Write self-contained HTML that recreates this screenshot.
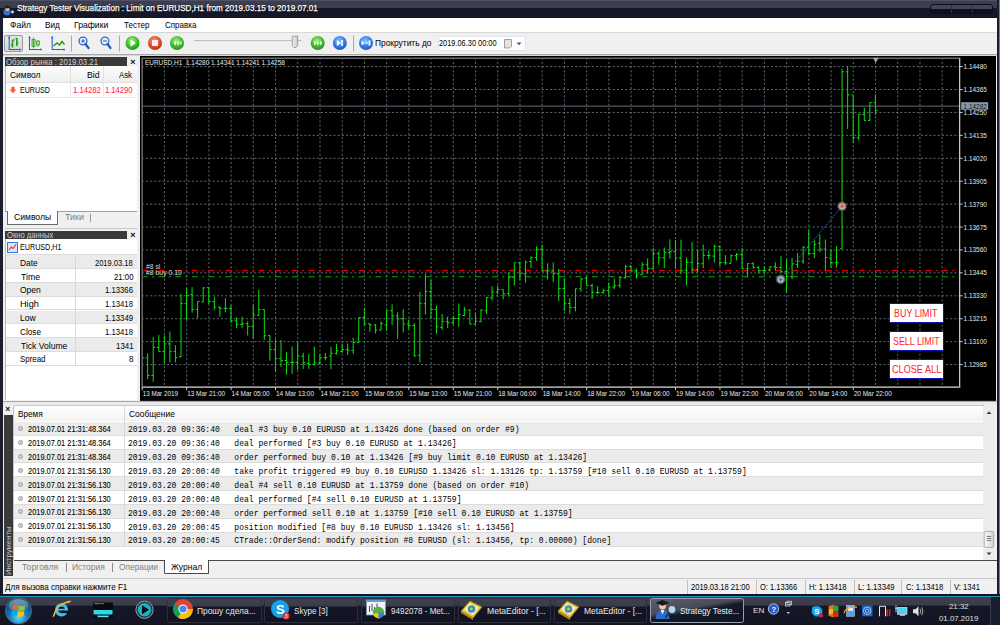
<!DOCTYPE html><html><head><meta charset="utf-8"><style>
*{margin:0;padding:0;box-sizing:border-box}
html,body{width:1000px;height:625px;overflow:hidden;background:#f0f0f0;font-family:"Liberation Sans",sans-serif;color:#000}
.a{position:absolute}
.t{position:absolute;white-space:nowrap;line-height:1}
.ax{font-family:"Liberation Sans",sans-serif;font-size:6.8px;fill:#e8e8e8}
.ax2{font-family:"Liberation Sans",sans-serif;font-size:7.3px;fill:#d8d8d8}
.mono{font-family:"Liberation Mono",monospace;font-size:8.06px}
</style></head><body><div class="a" style="left:0px;top:0px;width:1000px;height:17.9px;background:linear-gradient(#5a5d75 0px,#3d3f50 1.2px,#3c3e4e 7.5px,#161829 8.2px,#151727 17.6px)"></div>
<div class="a" style="left:930px;top:3.5px;width:63px;height:10.5px;border-radius:3px;background:linear-gradient(#44475a 0,#44475a 48%,#0e101c 52%,#0e101c 100%);border:1px solid #0a0c16"></div>
<div class="a" style="left:951px;top:4.5px;width:0.8px;height:8.5px;background:#2e3040"></div>
<div class="a" style="left:972px;top:4.5px;width:0.8px;height:8.5px;background:#2e3040"></div>
<svg class="a" style="left:2px;top:3px" width="14" height="13"><circle cx="5" cy="9" r="3.6" fill="#2f73c8"/><circle cx="5.5" cy="6" r="2" fill="#e8c090"/><path d="M1.5 4.2L5.5 2.2L9.5 4.2L5.5 5.6Z" fill="#202020"/><circle cx="10.5" cy="9" r="1.4" fill="#cfe6f8"/></svg>
<div class="t" style="left:17.43px;top:4.20px;font-size:9.3px;color:#fff;transform:scaleX(0.8763);transform-origin:0 0;text-shadow:0 0 1.5px #000;-webkit-text-stroke:0.25px #fff">Strategy Tester Visualization : Limit on EURUSD,H1 from 2019.03.15 to 2019.07.01</div>
<div class="a" style="left:0px;top:17px;width:3px;height:580px;background:#1a1d30"></div>
<div class="a" style="left:997px;top:0px;width:3px;height:597px;background:linear-gradient(90deg,#1a1d30 0,#1a1d30 66%,#2a9ac0 66%)"></div>
<div class="a" style="left:3px;top:17.9px;width:994px;height:14.1px;background:#fff"></div>
<div class="a" style="left:3px;top:32px;width:994px;height:1px;background:#d8d8d8"></div>
<div class="t" style="left:10.03px;top:21.09px;font-size:9.2px;color:#000;transform:scaleX(0.9310);transform-origin:0 0;">Файл</div>
<div class="t" style="left:45.35px;top:21.09px;font-size:9.2px;color:#000;transform:scaleX(0.8899);transform-origin:0 0;">Вид</div>
<div class="t" style="left:74.31px;top:21.09px;font-size:9.2px;color:#000;transform:scaleX(0.9378);transform-origin:0 0;">Графики</div>
<div class="t" style="left:123.84px;top:21.09px;font-size:9.2px;color:#000;transform:scaleX(0.8738);transform-origin:0 0;">Тестер</div>
<div class="t" style="left:164.60px;top:21.09px;font-size:9.2px;color:#000;transform:scaleX(0.8707);transform-origin:0 0;">Справка</div>
<div class="a" style="left:3px;top:53.8px;width:994px;height:1px;background:#a8a8a8"></div>
<div class="a" style="left:3px;top:54.8px;width:994px;height:1px;background:#d8d8d8"></div>
<div class="a" style="left:4.2px;top:35px;width:19.2px;height:16.6px;border:1px solid #9a9a9a;border-radius:2px;background:linear-gradient(#e6e6e6,#d8d8d8)"></div>
<svg class="a" style="left:0;top:0" width="1000" height="60"><g stroke="#2a5fd0" stroke-width="1.1" fill="none"><path d="M9.2 36.5V49.5H20"/></g><circle cx="20" cy="49.5" r="0.9" fill="#2a5fd0"/><path d="M9.2 36L8 38.2H10.4Z" fill="#2a5fd0"/><path d="M12.5 40V47.5M14.5 40H12.5M12.5 45H11M16.8 38V46M16.8 38.5H15.5M16.8 43H18.3" stroke="#20a020" stroke-width="1.6"/><path d="M29.5 36.5V49.5H41" stroke="#2a5fd0" stroke-width="1.1" fill="none"/><circle cx="41" cy="49.5" r="0.9" fill="#2a5fd0"/><path d="M29.5 36L28.3 38.2H30.7Z" fill="#2a5fd0"/><rect x="32" y="39.5" width="3" height="7" fill="#a8e090" stroke="#38a030" stroke-width="0.8"/><path d="M33.5 37.5V48.5M38 40V47" stroke="#38a030" stroke-width="0.8"/><rect x="36.5" y="41" width="3" height="4" fill="#a8e090" stroke="#38a030" stroke-width="0.8"/><path d="M52.2 36.5V49.5H64" stroke="#2a5fd0" stroke-width="1.1" fill="none"/><circle cx="64" cy="49.5" r="0.9" fill="#2a5fd0"/><path d="M52.2 36L51 38.2H53.4Z" fill="#2a5fd0"/><path d="M53.5 46L57 43L59.5 45L62 41.5L64.5 44.5" stroke="#20a020" stroke-width="1.5" fill="none"/><path d="M71.5 35.5V51.5" stroke="#a8a8a8" stroke-width="1"/><path d="M119.5 35.5V51.5" stroke="#a8a8a8" stroke-width="1"/><path d="M353.6 35.5V51.5" stroke="#a8a8a8" stroke-width="1"/><circle cx="83" cy="41" r="3.9" fill="#e8f2fc" stroke="#2a66d0" stroke-width="1.3"/><path d="M85.5 44L88.5 48" stroke="#2a5aa8" stroke-width="2.2" stroke-linecap="round"/><path d="M81 41H85" stroke="#2a66d0" stroke-width="1.1"/><path d="M83 39V43" stroke="#2a66d0" stroke-width="1.1"/><circle cx="105" cy="41" r="3.9" fill="#e8f2fc" stroke="#2a66d0" stroke-width="1.3"/><path d="M107.5 44L110.5 48" stroke="#2a5aa8" stroke-width="2.2" stroke-linecap="round"/><path d="M103 41H107" stroke="#2a66d0" stroke-width="1.1"/><defs><radialGradient id="gg" cx="0.45" cy="0.35" r="0.7"><stop offset="0" stop-color="#a8f090"/><stop offset="0.6" stop-color="#3cb828"/><stop offset="1" stop-color="#1f8a18"/></radialGradient><radialGradient id="rg" cx="0.45" cy="0.35" r="0.7"><stop offset="0" stop-color="#ff9a80"/><stop offset="0.6" stop-color="#e04a2a"/><stop offset="1" stop-color="#b02a10"/></radialGradient><radialGradient id="bg" cx="0.45" cy="0.35" r="0.7"><stop offset="0" stop-color="#8ec4ff"/><stop offset="0.6" stop-color="#2f7ae0"/><stop offset="1" stop-color="#1a55b0"/></radialGradient></defs><circle cx="132.5" cy="43" r="7" fill="url(#gg)"/><path d="M130.5 39.3L135.8 43L130.5 46.7Z" fill="#f4fff0"/><circle cx="155" cy="43" r="7" fill="url(#rg)"/><rect x="152" y="40" width="6" height="6" fill="#fff0ea"/><circle cx="177" cy="43" r="7" fill="url(#gg)"/><path d="M173.5 43L176 40.5V45.5Z M176.5 43L179 40.5V45.5Z M179.5 43L181.5 40.8V45.2Z" fill="#e8ffe0"/><circle cx="317.7" cy="43" r="7" fill="url(#gg)"/><path d="M314 40.5L316.5 43L314 45.5Z M317 40.5L319.5 43L317 45.5Z M320 40.5L322.3 43L320 45.5Z" fill="#e8ffe0"/><circle cx="339.8" cy="43" r="7" fill="url(#bg)"/><path d="M336.8 40L341 43L336.8 46Z" fill="#fff"/><rect x="341.3" y="40" width="1.6" height="6" fill="#fff"/><circle cx="366" cy="43" r="7" fill="url(#bg)"/><path d="M361.5 40.6L364.3 43L361.5 45.4Z" fill="#fff"/><rect x="364.6" y="42.3" width="3.6" height="1.4" fill="#d8e8ff"/><rect x="368.6" y="40.4" width="1.8" height="5.2" fill="#fff"/><path d="M194 40.8H301.5" stroke="#b0b0b0" stroke-width="1.2"/><path d="M194 41.6H301.5" stroke="#ffffff" stroke-width="0.6"/><path d="M292.3 36.3H297.7V45.5L295 48L292.3 45.5Z" fill="url(#thumb)" stroke="#8a8a8a" stroke-width="0.8"/><defs><linearGradient id="thumb" x1="0" x2="1"><stop offset="0" stop-color="#f4f4f4"/><stop offset="1" stop-color="#c8c8c8"/></linearGradient></defs></svg>
<div class="t" style="left:375.33px;top:39.09px;font-size:9.2px;color:#000;transform:scaleX(0.9133);transform-origin:0 0;">Прокрутить до</div>
<div class="a" style="left:437.6px;top:36.3px;width:88.4px;height:14.4px;background:#fff;border:1px solid #e4e4e4"></div>
<div class="t" style="left:438.93px;top:39.09px;font-size:9.2px;color:#000;transform:scaleX(0.8046);transform-origin:0 0;">2019.06.30 00:00</div>
<svg class="a" style="left:503px;top:38px" width="22" height="12"><path d="M1.5 1.5H8.5V8.2L6.8 10H1.5Z" fill="#e4e4e4" stroke="#8a8a8a" stroke-width="0.8"/><path d="M13.5 4.5H18.5L16 7.3Z" fill="#3a5a9a"/></svg>
<div class="a" style="left:5px;top:57px;width:122px;height:9px;background:#3a3a3a"></div>
<div class="t" style="left:6.15px;top:57.58px;font-size:8.4px;color:#d0d0d0;transform:scaleX(0.9267);transform-origin:0 0;">Обзор рынка : 2019.03.21</div>
<div class="t" style="left:130.3px;top:57.5px;font-size:9px;font-weight:bold;color:#111">×</div>
<div class="a" style="left:5px;top:66px;width:131.5px;height:145.3px;background:#fff;border-left:1px solid #b8b8b8"></div>
<div class="a" style="left:6px;top:66px;width:130.5px;height:16.5px;background:linear-gradient(#fdfdfd,#eeeeee);border-bottom:1px solid #e0e0e0"></div>
<div class="a" style="left:70.0px;top:66px;width:0.8px;height:16.5px;background:#e0e0e0"></div>
<div class="a" style="left:102.8px;top:66px;width:0.8px;height:16.5px;background:#e0e0e0"></div>
<div class="t" style="left:9.78px;top:71.19px;font-size:9.2px;color:#000;transform:scaleX(0.9219);transform-origin:0 0;">Символ</div>
<div class="t" style="left:87.00px;top:71.19px;font-size:9.2px;color:#000;transform:scaleX(0.9448);transform-origin:0 0;">Bid</div>
<div class="t" style="left:119.00px;top:71.19px;font-size:9.2px;color:#000;transform:scaleX(0.8487);transform-origin:0 0;">Ask</div>
<div class="a" style="left:6px;top:96.5px;width:130.5px;height:1px;background:#e8e8e8"></div>
<div class="a" style="left:70.0px;top:82.5px;width:0.8px;height:14px;background:#e8e8e8"></div>
<div class="a" style="left:102.8px;top:82.5px;width:0.8px;height:14px;background:#e8e8e8"></div>
<svg class="a" style="left:9px;top:86px" width="8" height="8"><path d="M2.5 0.8H5.5V3.6H7.3L4 7.3L0.7 3.6H2.5Z" fill="#f05a30"/></svg>
<div class="t" style="left:20.13px;top:85.99px;font-size:9.2px;color:#000;transform:scaleX(0.7698);transform-origin:0 0;">EURUSD</div>
<div class="t" style="left:72.92px;top:85.99px;font-size:9.2px;color:#ff2040;transform:scaleX(0.8347);transform-origin:0 0;">1.14282</div>
<div class="t" style="left:105.43px;top:85.99px;font-size:9.2px;color:#ff2040;transform:scaleX(0.8311);transform-origin:0 0;">1.14290</div>
<div class="a" style="left:5px;top:211.3px;width:131.5px;height:14px;background:#f0f0f0;border-top:1px solid #a0a0a0"></div>
<div class="a" style="left:7px;top:211.3px;width:50.5px;height:13.5px;background:#fff;border:1px solid #6a6a6a;border-top:none"></div>
<div class="t" style="left:13.77px;top:213.19px;font-size:9.2px;color:#000;transform:scaleX(0.9332);transform-origin:0 0;">Символы</div>
<div class="t" style="left:64.52px;top:213.19px;font-size:9.2px;color:#808080;transform:scaleX(0.9775);transform-origin:0 0;">Тики</div>
<div class="a" style="left:90px;top:214px;width:0.8px;height:8px;background:#9a9a9a"></div>
<div class="a" style="left:5px;top:227.8px;width:131.5px;height:1px;background:#c8c8c8"></div>
<div class="a" style="left:5px;top:231px;width:122px;height:8px;background:#3a3a3a"></div>
<div class="t" style="left:6.66px;top:230.98px;font-size:8.4px;color:#d0d0d0;transform:scaleX(0.9112);transform-origin:0 0;">Окно данных</div>
<div class="t" style="left:130.3px;top:231px;font-size:9px;font-weight:bold;color:#111">×</div>
<div class="a" style="left:5px;top:239px;width:131.5px;height:161.4px;background:#fff;border-left:1px solid #b8b8b8"></div>
<svg class="a" style="left:7px;top:242px" width="11" height="11"><rect x="0.5" y="0.5" width="10" height="10" fill="#d8e8f8" stroke="#3a78d0" stroke-width="1"/><path d="M2 8L4.2 5L6 6.5L9 2.5" stroke="#e03030" stroke-width="1.1" fill="none"/></svg>
<div class="t" style="left:20.13px;top:243.29px;font-size:9.2px;color:#000;transform:scaleX(0.7804);transform-origin:0 0;">EURUSD,H1</div>
<div class="a" style="left:6px;top:255.3px;width:130.5px;height:13.8px;background:#ebebeb;border-bottom:1px solid #dcdcdc"></div>
<div class="t" style="left:20.03px;top:258.79px;font-size:9.2px;color:#000;transform:scaleX(0.9145);transform-origin:0 0;">Date</div>
<div class="t" style="left:95.42px;top:258.79px;font-size:9.2px;color:#000;transform:scaleX(0.8183);transform-origin:0 0;">2019.03.18</div>
<div class="a" style="left:6px;top:269.1px;width:130.5px;height:13.8px;background:#ffffff;border-bottom:1px solid #dcdcdc"></div>
<div class="t" style="left:20.53px;top:272.59px;font-size:9.2px;color:#000;transform:scaleX(0.9485);transform-origin:0 0;">Time</div>
<div class="t" style="left:113.51px;top:272.59px;font-size:9.2px;color:#000;transform:scaleX(0.8507);transform-origin:0 0;">21:00</div>
<div class="a" style="left:6px;top:282.90000000000003px;width:130.5px;height:13.8px;background:#ebebeb;border-bottom:1px solid #dcdcdc"></div>
<div class="t" style="left:20.32px;top:286.39px;font-size:9.2px;color:#000;transform:scaleX(0.9264);transform-origin:0 0;">Open</div>
<div class="t" style="left:105.12px;top:286.39px;font-size:9.2px;color:#000;transform:scaleX(0.8416);transform-origin:0 0;">1.13366</div>
<div class="a" style="left:6px;top:296.70000000000005px;width:130.5px;height:13.8px;background:#ffffff;border-bottom:1px solid #dcdcdc"></div>
<div class="t" style="left:19.96px;top:300.19px;font-size:9.2px;color:#000;">High</div>
<div class="t" style="left:105.12px;top:300.19px;font-size:9.2px;color:#000;transform:scaleX(0.8416);transform-origin:0 0;">1.13418</div>
<div class="a" style="left:6px;top:310.5px;width:130.5px;height:13.8px;background:#ebebeb;border-bottom:1px solid #dcdcdc"></div>
<div class="t" style="left:20.02px;top:313.99px;font-size:9.2px;color:#000;transform:scaleX(0.9290);transform-origin:0 0;">Low</div>
<div class="t" style="left:105.12px;top:313.99px;font-size:9.2px;color:#000;transform:scaleX(0.8428);transform-origin:0 0;">1.13349</div>
<div class="a" style="left:6px;top:324.3px;width:130.5px;height:13.8px;background:#ffffff;border-bottom:1px solid #dcdcdc"></div>
<div class="t" style="left:20.29px;top:327.79px;font-size:9.2px;color:#000;transform:scaleX(0.8925);transform-origin:0 0;">Close</div>
<div class="t" style="left:105.12px;top:327.79px;font-size:9.2px;color:#000;transform:scaleX(0.8416);transform-origin:0 0;">1.13418</div>
<div class="a" style="left:6px;top:338.1px;width:130.5px;height:13.8px;background:#ebebeb;border-bottom:1px solid #dcdcdc"></div>
<div class="t" style="left:20.53px;top:341.59px;font-size:9.2px;color:#000;transform:scaleX(0.9314);transform-origin:0 0;">Tick Volume</div>
<div class="t" style="left:115.61px;top:341.59px;font-size:9.2px;color:#000;transform:scaleX(0.8572);transform-origin:0 0;">1341</div>
<div class="a" style="left:6px;top:351.90000000000003px;width:130.5px;height:13.8px;background:#ffffff;border-bottom:1px solid #dcdcdc"></div>
<div class="t" style="left:20.34px;top:355.39px;font-size:9.2px;color:#000;transform:scaleX(0.8584);transform-origin:0 0;">Spread</div>
<div class="t" style="left:128.53px;top:355.39px;font-size:9.2px;color:#000;transform:scaleX(0.9019);transform-origin:0 0;">8</div>
<div class="a" style="left:6px;top:254.3px;width:130.5px;height:1px;background:#dcdcdc"></div>
<div class="a" style="left:75.3px;top:254.8px;width:0.8px;height:110.4px;background:#d8d8d8"></div>
<svg width="856.2" height="344.9" viewBox="139.8 55.8 856.2 344.9" style="position:absolute;left:139.8px;top:55.8px">
<rect x="139.8" y="55.8" width="856.2" height="344.9" fill="#000"/>
<path d="M164.25 59V387 M186.47 59V387 M208.69 59V387 M230.91 59V387 M253.14 59V387 M275.36 59V387 M297.58 59V387 M319.80 59V387 M342.02 59V387 M364.24 59V387 M386.46 59V387 M408.69 59V387 M430.91 59V387 M453.13 59V387 M475.35 59V387 M497.57 59V387 M519.79 59V387 M542.01 59V387 M564.24 59V387 M586.46 59V387 M608.68 59V387 M630.90 59V387 M653.12 59V387 M675.34 59V387 M697.56 59V387 M719.78 59V387 M742.01 59V387 M764.23 59V387 M786.45 59V387 M808.67 59V387 M830.89 59V387 M853.11 59V387 M875.33 59V387 M897.56 59V387 M919.78 59V387 M942.00 59V387 M143 66.40H960 M143 89.32H960 M143 112.24H960 M143 135.16H960 M143 158.08H960 M143 181.00H960 M143 203.92H960 M143 226.84H960 M143 249.76H960 M143 272.68H960 M143 295.60H960 M143 318.52H960 M143 341.44H960 M143 364.36H960" stroke="#8a9aab" stroke-width="0.8" stroke-dasharray="2.0835 2.0835" stroke-dashoffset="1.4" fill="none" opacity="0.85"/>
<path d="M143 105.9H960" stroke="#4e5862" stroke-width="1.4"/>
<path d="M143 270.4H960" stroke="#e00000" stroke-width="1.1" stroke-dasharray="5.9 4.3 2.2 4.27" stroke-dashoffset="1.3"/>
<path d="M143 276.5H960" stroke="#00b400" stroke-width="1.1" stroke-dasharray="5.9 4.3 2.2 4.27" stroke-dashoffset="1.3"/>
<path d="M147.46 353.0V378.9M145.56 357.8H147.46M147.46 375.3H149.36 M153.01 336.9V381.7M151.11 375.3H153.01M153.01 347.1H154.91 M158.57 334.7V351.4M156.67 347.1H158.57M158.57 351.4H160.47 M164.12 335.1V362.3M162.22 351.4H164.12M164.12 343.7H166.02 M169.68 331.3V362.3M167.78 343.7H169.68M169.68 351.4H171.58 M175.23 345.0V362.3M173.33 351.4H175.23M175.23 357.4H177.13 M180.79 293.8V357.1M178.89 356.5H180.79M180.79 303.4H182.69 M186.34 288.0V320.1M184.44 303.4H186.34M186.34 295.4H188.24 M191.90 287.0V312.4M190.00 294.5H191.90M191.90 309.2H193.80 M197.46 301.3V317.9M195.56 309.2H197.46M197.46 301.3H199.36 M203.01 287.0V301.8M201.11 301.8H203.01M203.01 287.7H204.91 M208.57 287.0V303.7M206.67 287.4H208.57M208.57 301.5H210.47 M214.12 296.6V310.0M212.22 301.5H214.12M214.12 306.9H216.02 M219.68 306.2V316.5M217.78 307.1H219.68M219.68 308.2H221.58 M225.23 297.9V312.0M223.33 308.2H225.23M225.23 308.2H227.13 M230.79 305.0V322.3M228.89 308.2H230.79M230.79 320.7H232.69 M236.34 317.1V328.0M234.44 320.7H236.34M236.34 324.2H238.24 M241.90 316.5V327.6M240.00 324.2H241.90M241.90 323.5H243.80 M247.45 321.2V335.3M245.55 323.5H247.45M247.45 326.4H249.35 M253.01 304.6V338.5M251.11 326.3H253.01M253.01 314.8H254.91 M258.57 289.8V315.5M256.67 315.0H258.57M258.57 309.4H260.47 M264.12 309.0V339.8M262.22 309.4H264.12M264.12 335.5H266.02 M269.68 335.1V360.3M267.78 335.4H269.68M269.68 349.4H271.58 M275.23 339.0V371.2M273.33 349.4H275.23M275.23 358.4H277.13 M280.79 339.8V366.7M278.89 358.4H280.79M280.79 360.3H282.69 M286.34 352.0V374.4M284.44 360.3H286.34M286.34 362.3H288.24 M291.90 346.2V373.8M290.00 362.3H291.90M291.90 362.3H293.80 M297.45 342.4V370.0M295.55 362.3H297.45M297.45 355.9H299.35 M303.01 352.6V368.7M301.11 355.9H303.01M303.01 362.3H304.91 M308.57 353.9V368.7M306.67 363.5H308.57M308.57 364.2H310.47 M314.12 346.4V365.3M312.22 364.0H314.12M314.12 362.7H316.02 M319.68 353.8V364.7M317.78 362.7H319.68M319.68 357.6H321.58 M325.23 352.8V360.2M323.33 357.6H325.23M325.23 357.6H327.13 M330.79 346.7V369.1M328.89 355.7H330.79M330.79 353.1H332.69 M336.34 343.8V354.4M334.44 353.1H336.34M336.34 350.6H338.24 M341.90 343.5V352.5M340.00 351.2H341.90M341.90 349.3H343.80 M347.45 343.3V354.8M345.55 349.3H347.45M347.45 350.2H349.35 M353.01 337.4V353.8M351.11 350.2H353.01M353.01 342.3H354.91 M358.56 317.3V342.3M356.66 342.3H358.56M358.56 317.3H360.46 M364.12 307.7V325.6M362.22 317.3H364.12M364.12 323.7H366.02 M369.68 323.4V331.7M367.78 323.6H369.68M369.68 324.7H371.58 M375.23 324.0V333.2M373.33 324.7H375.23M375.23 329.8H377.13 M380.79 321.2V330.2M378.89 329.8H380.79M380.79 323.4H382.69 M386.34 310.2V330.4M384.44 324.7H386.34M386.34 310.6H388.24 M391.90 304.2V324.7M390.00 310.6H391.90M391.90 315.7H393.80 M397.45 311.9V338.7M395.55 315.7H397.45M397.45 318.6H399.35 M403.01 308.9V332.3M401.11 318.6H403.01M403.01 323.8H404.91 M408.56 319.5V329.0M406.66 323.8H408.56M408.56 325.5H410.46 M414.12 323.0V356.5M412.22 325.5H414.12M414.12 355.6H416.02 M419.68 291.8V362.3M417.78 355.2H419.68M419.68 303.4H421.58 M425.23 273.4V314.4M423.33 303.5H425.23M425.23 291.4H427.13 M430.79 279.8V318.3M428.89 291.4H430.79M430.79 309.3H432.69 M436.34 305.5V333.5M434.44 309.3H436.34M436.34 326.6H438.24 M441.90 313.8V329.8M440.00 327.2H441.90M441.90 321.2H443.80 M447.45 316.3V327.9M445.55 321.5H447.45M447.45 322.5H449.35 M453.01 316.1V324.7M451.11 322.5H453.01M453.01 318.3H454.91 M458.56 303.3V326.7M456.66 318.3H458.56M458.56 314.4H460.46 M464.12 306.7V316.2M462.22 315.3H464.12M464.12 309.8H466.02 M469.67 309.2V324.3M467.77 309.8H469.67M469.67 323.9H471.57 M475.23 312.9V324.6M473.33 323.9H475.23M475.23 321.0H477.13 M480.79 309.2V322.0M478.89 321.4H480.79M480.79 309.8H482.69 M486.34 296.8V313.9M484.44 310.4H486.34M486.34 297.4H488.24 M491.90 286.1V300.4M490.00 297.6H491.90M491.90 291.9H493.80 M497.45 285.5V294.4M495.55 291.9H497.45M497.45 289.3H499.35 M503.01 289.3V299.2M501.11 289.3H503.01M503.01 293.5H504.91 M508.56 272.0V296.3M506.66 293.5H508.56M508.56 277.1H510.46 M514.12 262.4V285.5M512.22 277.1H514.12M514.12 262.6H516.02 M519.67 261.4V280.0M517.77 262.6H519.67M519.67 273.5H521.57 M525.23 260.5V282.5M523.33 273.5H525.23M525.23 262.0H527.13 M530.79 256.2V267.8M528.89 261.4H530.79M530.79 257.5H532.69 M536.34 246.0V260.7M534.44 257.5H536.34M536.34 249.0H538.24 M541.90 244.3V271.0M540.00 249.0H541.90M541.90 270.7H543.80 M547.45 263.0V279.3M545.55 270.7H547.45M547.45 270.7H549.35 M553.01 262.3V281.9M551.11 270.7H553.01M553.01 273.3H554.91 M558.56 269.0V301.0M556.66 273.5H558.56M558.56 288.3H560.46 M564.12 278.0V311.0M562.22 288.4H564.12M564.12 303.4H566.02 M569.67 297.9V313.5M567.77 303.3H569.67M569.67 307.4H571.57 M575.23 288.2V311.0M573.33 307.4H575.23M575.23 288.6H577.13 M580.78 278.3V291.8M578.88 288.6H580.78M580.78 278.7H582.68 M586.34 276.7V285.4M584.44 277.9H586.34M586.34 285.4H588.24 M591.90 283.4V298.8M590.00 285.4H591.90M591.90 292.0H593.80 M597.45 286.0V293.7M595.55 292.4H597.45M597.45 292.4H599.35 M603.01 288.6V293.7M601.11 292.4H603.01M603.01 290.5H604.91 M608.56 282.2V296.2M606.66 290.5H608.56M608.56 286.9H610.46 M614.12 278.3V289.2M612.22 286.9H614.12M614.12 285.4H616.02 M619.67 276.4V287.6M617.77 285.3H619.67M619.67 277.4H621.57 M625.23 264.6V278.4M623.33 277.4H625.23M625.23 266.5H627.13 M630.78 264.8V270.7M628.88 266.5H630.78M630.78 270.7H632.68 M636.34 268.2V278.4M634.44 270.7H636.34M636.34 274.6H638.24 M641.89 262.0V274.8M640.00 274.6H641.89M641.89 264.6H643.79 M647.45 258.2V273.5M645.55 264.6H647.45M647.45 268.4H649.35 M653.01 247.9V269.7M651.11 268.4H653.01M653.01 253.3H654.91 M658.56 251.1V264.8M656.66 253.3H658.56M658.56 257.5H660.46 M664.12 247.3V267.8M662.22 257.5H664.12M664.12 252.4H666.02 M669.67 239.2V258.6M667.77 252.4H669.67M669.67 251.5H671.57 M675.23 239.8V268.7M673.33 251.4H675.23M675.23 257.8H677.13 M680.78 239.5V273.8M678.88 257.8H680.78M680.78 270.6H682.68 M686.34 257.1V285.3M684.44 269.7H686.34M686.34 262.3H688.24 M691.89 241.8V273.1M689.99 262.3H691.89M691.89 268.9H693.79 M697.45 249.4V272.5M695.55 269.3H697.45M697.45 263.5H699.35 M703.01 244.3V268.0M701.11 263.5H703.01M703.01 255.2H704.91 M708.56 250.7V259.0M706.66 255.2H708.56M708.56 255.2H710.46 M714.12 244.3V262.3M712.22 255.9H714.12M714.12 246.2H716.02 M719.67 245.6V265.8M717.77 246.2H719.67M719.67 262.3H721.57 M725.23 255.0V264.7M723.33 262.3H725.23M725.23 262.9H727.13 M730.78 254.4V263.4M728.88 263.2H730.78M730.78 255.5H732.68 M736.34 252.9V260.2M734.44 255.5H736.34M736.34 254.4H738.24 M741.89 248.0V268.5M739.99 254.4H741.89M741.89 268.5H743.79 M747.45 263.2V276.9M745.55 268.5H747.45M747.45 263.4H749.35 M753.00 262.1V268.5M751.11 263.4H753.00M753.00 267.3H754.90 M758.56 266.0V273.4M756.66 267.3H758.56M758.56 270.5H760.46 M764.12 266.2V273.7M762.22 270.5H764.12M764.12 270.5H766.02 M769.67 266.2V271.1M767.77 269.8H769.67M769.67 266.6H771.57 M775.23 262.1V270.5M773.33 266.6H775.23M775.23 267.3H777.13 M780.78 255.6V272.6M778.88 267.3H780.78M780.78 271.5H782.68 M786.34 259.2V292.5M784.44 271.3H786.34M786.34 276.5H788.24 M791.89 257.9V279.0M789.99 276.5H791.89M791.89 263.7H793.79 M797.45 252.8V267.8M795.55 264.3H797.45M797.45 261.1H799.35 M803.00 246.0V263.7M801.10 261.1H803.00M803.00 247.0H804.90 M808.56 229.7V254.7M806.66 247.0H808.56M808.56 253.4H810.46 M814.12 240.0V257.9M812.22 253.4H814.12M814.12 244.2H816.02 M819.67 234.2V251.9M817.77 243.2H819.67M819.67 248.9H821.57 M825.23 239.3V270.7M823.33 248.9H825.23M825.23 257.3H827.13 M830.78 248.9V267.5M828.88 257.9H830.78M830.78 262.6H832.68 M836.34 246.2V267.5M834.44 262.6H836.34M836.34 262.5H838.24 M841.89 68.8V249.0M839.99 248.6H841.89M841.89 71.6H843.79 M847.45 66.5V128.8M845.55 71.6H847.45M847.45 94.7H849.35 M853.00 95.3V142.9M851.10 94.7H853.00M853.00 137.5H854.90 M858.56 114.2V140.1M856.66 137.5H858.56M858.56 114.2H860.46 M864.12 107.5V120.6M862.22 114.2H864.12M864.12 120.3H866.01 M869.67 102.1V120.6M867.77 120.3H869.67M869.67 102.4H871.57 M875.23 94.0V114.5M873.33 102.4H875.23M875.23 110.3H877.13" stroke="#10e010" stroke-width="1" fill="none"/>
<path d="M142.5 357.8H144.2" stroke="#10e010" stroke-width="1"/>
<path d="M780.5 279 L841.9 206.1" stroke="#2a70b8" stroke-width="1" stroke-dasharray="1.8 1.4"/>
<circle cx="780.5" cy="279.2" r="4.5" fill="#7a7670" stroke="#4a4640" stroke-width="0.7"/>
<circle cx="780.5" cy="279.2" r="2.9" fill="#c4c0b8"/>
<path d="M780.5 277.0L782.7 279.2L780.5 281.4L778.3 279.2Z" fill="#2a7fd8"/>
<circle cx="841.9" cy="206.1" r="4.5" fill="#7a7670" stroke="#4a4640" stroke-width="0.7"/>
<circle cx="841.9" cy="206.1" r="2.9" fill="#c4c0b8"/>
<path d="M841.9 203.9L844.1 206.1L841.9 208.29999999999998L839.6999999999999 206.1Z" fill="#f05030"/>
<path d="M142 58.1H959.6V387H142Z" stroke="#6a6a6a" stroke-width="1.5" fill="none"/>
<path d="M959.3 58.1V386.9H142" stroke="#c8c8c8" stroke-width="1" fill="none"/>
<path d="M959.6 66.40H962.5 M959.6 89.32H962.5 M959.6 112.24H962.5 M959.6 135.16H962.5 M959.6 158.08H962.5 M959.6 181.00H962.5 M959.6 203.92H962.5 M959.6 226.84H962.5 M959.6 249.76H962.5 M959.6 272.68H962.5 M959.6 295.60H962.5 M959.6 318.52H962.5 M959.6 341.44H962.5 M959.6 364.36H962.5 M142.00 387V390 M186.44 387V390 M230.89 387V390 M275.33 387V390 M319.78 387V390 M364.22 387V390 M408.66 387V390 M453.11 387V390 M497.55 387V390 M542.00 387V390 M586.44 387V390 M630.88 387V390 M675.33 387V390 M719.77 387V390 M764.22 387V390 M808.66 387V390 M853.10 387V390" stroke="#c8c8c8" stroke-width="1"/>
<text x="963.4" y="68.90" class="ax" textLength="23.2" lengthAdjust="spacingAndGlyphs">1.14480</text>
<text x="963.4" y="91.82" class="ax" textLength="23.2" lengthAdjust="spacingAndGlyphs">1.14365</text>
<text x="963.4" y="114.74" class="ax" textLength="23.2" lengthAdjust="spacingAndGlyphs">1.14250</text>
<text x="963.4" y="137.66" class="ax" textLength="23.2" lengthAdjust="spacingAndGlyphs">1.14135</text>
<text x="963.4" y="160.58" class="ax" textLength="23.2" lengthAdjust="spacingAndGlyphs">1.14020</text>
<text x="963.4" y="183.50" class="ax" textLength="23.2" lengthAdjust="spacingAndGlyphs">1.13905</text>
<text x="963.4" y="206.42" class="ax" textLength="23.2" lengthAdjust="spacingAndGlyphs">1.13790</text>
<text x="963.4" y="229.34" class="ax" textLength="23.2" lengthAdjust="spacingAndGlyphs">1.13675</text>
<text x="963.4" y="252.26" class="ax" textLength="23.2" lengthAdjust="spacingAndGlyphs">1.13560</text>
<text x="963.4" y="275.18" class="ax" textLength="23.2" lengthAdjust="spacingAndGlyphs">1.13445</text>
<text x="963.4" y="298.10" class="ax" textLength="23.2" lengthAdjust="spacingAndGlyphs">1.13330</text>
<text x="963.4" y="321.02" class="ax" textLength="23.2" lengthAdjust="spacingAndGlyphs">1.13215</text>
<text x="963.4" y="343.94" class="ax" textLength="23.2" lengthAdjust="spacingAndGlyphs">1.13100</text>
<text x="963.4" y="366.86" class="ax" textLength="23.2" lengthAdjust="spacingAndGlyphs">1.12985</text>
<text x="142.50" y="396" class="ax" textLength="35.2" lengthAdjust="spacingAndGlyphs">13 Mar 2019</text>
<text x="186.94" y="396" class="ax" textLength="38.0" lengthAdjust="spacingAndGlyphs">13 Mar 21:00</text>
<text x="231.39" y="396" class="ax" textLength="38.0" lengthAdjust="spacingAndGlyphs">14 Mar 05:00</text>
<text x="275.83" y="396" class="ax" textLength="38.0" lengthAdjust="spacingAndGlyphs">14 Mar 13:00</text>
<text x="320.28" y="396" class="ax" textLength="38.0" lengthAdjust="spacingAndGlyphs">14 Mar 21:00</text>
<text x="364.72" y="396" class="ax" textLength="38.0" lengthAdjust="spacingAndGlyphs">15 Mar 05:00</text>
<text x="409.16" y="396" class="ax" textLength="38.0" lengthAdjust="spacingAndGlyphs">15 Mar 13:00</text>
<text x="453.61" y="396" class="ax" textLength="38.0" lengthAdjust="spacingAndGlyphs">15 Mar 21:00</text>
<text x="498.05" y="396" class="ax" textLength="38.0" lengthAdjust="spacingAndGlyphs">18 Mar 06:00</text>
<text x="542.50" y="396" class="ax" textLength="38.0" lengthAdjust="spacingAndGlyphs">18 Mar 14:00</text>
<text x="586.94" y="396" class="ax" textLength="38.0" lengthAdjust="spacingAndGlyphs">18 Mar 22:00</text>
<text x="631.38" y="396" class="ax" textLength="38.0" lengthAdjust="spacingAndGlyphs">19 Mar 06:00</text>
<text x="675.83" y="396" class="ax" textLength="38.0" lengthAdjust="spacingAndGlyphs">19 Mar 14:00</text>
<text x="720.27" y="396" class="ax" textLength="38.0" lengthAdjust="spacingAndGlyphs">19 Mar 22:00</text>
<text x="764.72" y="396" class="ax" textLength="38.0" lengthAdjust="spacingAndGlyphs">20 Mar 06:00</text>
<text x="809.16" y="396" class="ax" textLength="38.0" lengthAdjust="spacingAndGlyphs">20 Mar 14:00</text>
<text x="853.60" y="396" class="ax" textLength="38.0" lengthAdjust="spacingAndGlyphs">20 Mar 22:00</text>
<rect x="961" y="102" width="27" height="7.6" fill="#8497ab"/>
<text x="963.4" y="108.4" class="ax" style="fill:#1a1a1a" textLength="23.2" lengthAdjust="spacingAndGlyphs">1.14282</text>
<path d="M872.6 57.5H878.6L875.6 62.5Z" fill="#9aa8b8"/>
<text x="144.7" y="65" class="ax" textLength="140" lengthAdjust="spacingAndGlyphs">EURUSD,H1&#160; 1.14280 1.14341 1.14241 1.14258</text>
<text x="145.8" y="268.9" class="ax2" textLength="14.3" lengthAdjust="spacingAndGlyphs">#8 sl</text>
<text x="145.8" y="275" class="ax2" textLength="35.8" lengthAdjust="spacingAndGlyphs">#8 buy 0.10</text>
</svg>
<div class="a" style="left:889px;top:302.9px;width:55.2px;height:20.4px;background:#fff;border:1.2px solid #1010b0"></div>
<div class="a" style="left:889px;top:330.9px;width:55.2px;height:20.4px;background:#fff;border:1.2px solid #1010b0"></div>
<div class="a" style="left:889px;top:358.8px;width:55.2px;height:20.4px;background:#fff;border:1.2px solid #1010b0"></div>
<div class="t" style="left:894.39px;top:308.31px;font-size:10.8px;color:#ff2030;transform:scaleX(0.8269);transform-origin:0 0;">BUY LIMIT</div>
<div class="t" style="left:893.10px;top:336.31px;font-size:10.8px;color:#ff2030;transform:scaleX(0.8230);transform-origin:0 0;">SELL LIMIT</div>
<div class="t" style="left:891.54px;top:364.21px;font-size:10.8px;color:#ff2030;transform:scaleX(0.8457);transform-origin:0 0;">CLOSE ALL</div>
<div class="a" style="left:3px;top:400.8px;width:994px;height:1.2px;background:#a8a8a8"></div>
<div class="a" style="left:3px;top:402px;width:994px;height:3.2px;background:#eaeaea"></div>
<div class="a" style="left:13.5px;top:405.2px;width:970px;height:1px;background:#c8c8c8"></div>
<div class="t" style="left:5.2px;top:404.8px;font-size:8.5px;font-weight:bold;color:#111">×</div>
<div class="a" style="left:3.5px;top:415px;width:9px;height:160.7px;background:#3a3a3a"></div>
<div class="t" style="left:4.5px;top:575.3px;font-size:7.8px;color:#c8c8c8;transform-origin:0 0;transform:rotate(-90deg)">Инструменты</div>
<div class="a" style="left:13.5px;top:405.7px;width:969.5px;height:154.5px;background:#fff"></div>
<div class="a" style="left:13.5px;top:405.7px;width:969.5px;height:15.7px;background:linear-gradient(#ffffff,#f2f2f2)"></div>
<div class="a" style="left:124.2px;top:405.7px;width:0.8px;height:140.8px;background:#e0e0e0"></div>
<div class="t" style="left:17.75px;top:409.69px;font-size:9.2px;color:#000;transform:scaleX(0.8893);transform-origin:0 0;">Время</div>
<div class="t" style="left:129.28px;top:409.69px;font-size:9.2px;color:#000;transform:scaleX(0.9172);transform-origin:0 0;">Сообщение</div>
<div class="a" style="left:13.5px;top:421.8px;width:969.5px;height:13.9px;background:#ebebeb;border-bottom:1px solid #dcdcdc"></div>
<div class="a" style="left:18px;top:426.10px;width:5px;height:5px;border-radius:50%;background:#d0d0d0;border:1px solid #a0a0a0"></div>
<div class="t" style="left:28.33px;top:424.17px;font-size:9.8px;color:#000;transform:scaleX(0.7588);transform-origin:0 0;-webkit-text-stroke:0.1px #000">2019.07.01 21:31:48.364</div>
<div class="t" style="left:127.6px;top:425.41px;font-family:Liberation Mono,monospace;font-size:9.6px;color:#000;transform:scaleX(0.8396);transform-origin:0 0">2019.03.20&nbsp;09:36:40&nbsp;&nbsp;&nbsp;deal&nbsp;#3&nbsp;buy&nbsp;0.10&nbsp;EURUSD&nbsp;at&nbsp;1.13426&nbsp;done&nbsp;(based&nbsp;on&nbsp;order&nbsp;#9)</div>
<div class="a" style="left:13.5px;top:435.68px;width:969.5px;height:13.9px;background:#ffffff;border-bottom:1px solid #dcdcdc"></div>
<div class="a" style="left:18px;top:439.98px;width:5px;height:5px;border-radius:50%;background:#d0d0d0;border:1px solid #a0a0a0"></div>
<div class="t" style="left:28.33px;top:438.05px;font-size:9.8px;color:#000;transform:scaleX(0.7588);transform-origin:0 0;-webkit-text-stroke:0.1px #000">2019.07.01 21:31:48.364</div>
<div class="t" style="left:127.6px;top:439.29px;font-family:Liberation Mono,monospace;font-size:9.6px;color:#000;transform:scaleX(0.8396);transform-origin:0 0">2019.03.20&nbsp;09:36:40&nbsp;&nbsp;&nbsp;deal&nbsp;performed&nbsp;[#3&nbsp;buy&nbsp;0.10&nbsp;EURUSD&nbsp;at&nbsp;1.13426]</div>
<div class="a" style="left:13.5px;top:449.56px;width:969.5px;height:13.9px;background:#ebebeb;border-bottom:1px solid #dcdcdc"></div>
<div class="a" style="left:18px;top:453.86px;width:5px;height:5px;border-radius:50%;background:#d0d0d0;border:1px solid #a0a0a0"></div>
<div class="t" style="left:28.33px;top:451.93px;font-size:9.8px;color:#000;transform:scaleX(0.7588);transform-origin:0 0;-webkit-text-stroke:0.1px #000">2019.07.01 21:31:48.364</div>
<div class="t" style="left:127.6px;top:453.17px;font-family:Liberation Mono,monospace;font-size:9.6px;color:#000;transform:scaleX(0.8396);transform-origin:0 0">2019.03.20&nbsp;09:36:40&nbsp;&nbsp;&nbsp;order&nbsp;performed&nbsp;buy&nbsp;0.10&nbsp;at&nbsp;1.13426&nbsp;[#9&nbsp;buy&nbsp;limit&nbsp;0.10&nbsp;EURUSD&nbsp;at&nbsp;1.13426]</div>
<div class="a" style="left:13.5px;top:463.44px;width:969.5px;height:13.9px;background:#ffffff;border-bottom:1px solid #dcdcdc"></div>
<div class="a" style="left:18px;top:467.74px;width:5px;height:5px;border-radius:50%;background:#d0d0d0;border:1px solid #a0a0a0"></div>
<div class="t" style="left:28.33px;top:465.81px;font-size:9.8px;color:#000;transform:scaleX(0.7592);transform-origin:0 0;-webkit-text-stroke:0.1px #000">2019.07.01 21:31:56.130</div>
<div class="t" style="left:127.6px;top:467.05px;font-family:Liberation Mono,monospace;font-size:9.6px;color:#000;transform:scaleX(0.8396);transform-origin:0 0">2019.03.20&nbsp;20:00:40&nbsp;&nbsp;&nbsp;take&nbsp;profit&nbsp;triggered&nbsp;#9&nbsp;buy&nbsp;0.10&nbsp;EURUSD&nbsp;1.13426&nbsp;sl:&nbsp;1.13126&nbsp;tp:&nbsp;1.13759&nbsp;[#10&nbsp;sell&nbsp;0.10&nbsp;EURUSD&nbsp;at&nbsp;1.13759]</div>
<div class="a" style="left:13.5px;top:477.32px;width:969.5px;height:13.9px;background:#ebebeb;border-bottom:1px solid #dcdcdc"></div>
<div class="a" style="left:18px;top:481.62px;width:5px;height:5px;border-radius:50%;background:#d0d0d0;border:1px solid #a0a0a0"></div>
<div class="t" style="left:28.33px;top:479.69px;font-size:9.8px;color:#000;transform:scaleX(0.7592);transform-origin:0 0;-webkit-text-stroke:0.1px #000">2019.07.01 21:31:56.130</div>
<div class="t" style="left:127.6px;top:480.93px;font-family:Liberation Mono,monospace;font-size:9.6px;color:#000;transform:scaleX(0.8396);transform-origin:0 0">2019.03.20&nbsp;20:00:40&nbsp;&nbsp;&nbsp;deal&nbsp;#4&nbsp;sell&nbsp;0.10&nbsp;EURUSD&nbsp;at&nbsp;1.13759&nbsp;done&nbsp;(based&nbsp;on&nbsp;order&nbsp;#10)</div>
<div class="a" style="left:13.5px;top:491.20000000000005px;width:969.5px;height:13.9px;background:#ffffff;border-bottom:1px solid #dcdcdc"></div>
<div class="a" style="left:18px;top:495.50px;width:5px;height:5px;border-radius:50%;background:#d0d0d0;border:1px solid #a0a0a0"></div>
<div class="t" style="left:28.33px;top:493.57px;font-size:9.8px;color:#000;transform:scaleX(0.7592);transform-origin:0 0;-webkit-text-stroke:0.1px #000">2019.07.01 21:31:56.130</div>
<div class="t" style="left:127.6px;top:494.81px;font-family:Liberation Mono,monospace;font-size:9.6px;color:#000;transform:scaleX(0.8396);transform-origin:0 0">2019.03.20&nbsp;20:00:40&nbsp;&nbsp;&nbsp;deal&nbsp;performed&nbsp;[#4&nbsp;sell&nbsp;0.10&nbsp;EURUSD&nbsp;at&nbsp;1.13759]</div>
<div class="a" style="left:13.5px;top:505.08000000000004px;width:969.5px;height:13.9px;background:#ebebeb;border-bottom:1px solid #dcdcdc"></div>
<div class="a" style="left:18px;top:509.38px;width:5px;height:5px;border-radius:50%;background:#d0d0d0;border:1px solid #a0a0a0"></div>
<div class="t" style="left:28.33px;top:507.45px;font-size:9.8px;color:#000;transform:scaleX(0.7592);transform-origin:0 0;-webkit-text-stroke:0.1px #000">2019.07.01 21:31:56.130</div>
<div class="t" style="left:127.6px;top:508.69px;font-family:Liberation Mono,monospace;font-size:9.6px;color:#000;transform:scaleX(0.8396);transform-origin:0 0">2019.03.20&nbsp;20:00:40&nbsp;&nbsp;&nbsp;order&nbsp;performed&nbsp;sell&nbsp;0.10&nbsp;at&nbsp;1.13759&nbsp;[#10&nbsp;sell&nbsp;0.10&nbsp;EURUSD&nbsp;at&nbsp;1.13759]</div>
<div class="a" style="left:13.5px;top:518.96px;width:969.5px;height:13.9px;background:#ffffff;border-bottom:1px solid #dcdcdc"></div>
<div class="a" style="left:18px;top:523.26px;width:5px;height:5px;border-radius:50%;background:#d0d0d0;border:1px solid #a0a0a0"></div>
<div class="t" style="left:28.33px;top:521.33px;font-size:9.8px;color:#000;transform:scaleX(0.7592);transform-origin:0 0;-webkit-text-stroke:0.1px #000">2019.07.01 21:31:56.130</div>
<div class="t" style="left:127.6px;top:522.57px;font-family:Liberation Mono,monospace;font-size:9.6px;color:#000;transform:scaleX(0.8396);transform-origin:0 0">2019.03.20&nbsp;20:00:45&nbsp;&nbsp;&nbsp;position&nbsp;modified&nbsp;[#8&nbsp;buy&nbsp;0.10&nbsp;EURUSD&nbsp;1.13426&nbsp;sl:&nbsp;1.13456]</div>
<div class="a" style="left:13.5px;top:532.84px;width:969.5px;height:13.9px;background:#ebebeb;border-bottom:1px solid #dcdcdc"></div>
<div class="a" style="left:18px;top:537.14px;width:5px;height:5px;border-radius:50%;background:#d0d0d0;border:1px solid #a0a0a0"></div>
<div class="t" style="left:28.33px;top:535.21px;font-size:9.8px;color:#000;transform:scaleX(0.7592);transform-origin:0 0;-webkit-text-stroke:0.1px #000">2019.07.01 21:31:56.130</div>
<div class="t" style="left:127.6px;top:536.45px;font-family:Liberation Mono,monospace;font-size:9.6px;color:#000;transform:scaleX(0.8396);transform-origin:0 0">2019.03.20&nbsp;20:00:45&nbsp;&nbsp;&nbsp;CTrade::OrderSend:&nbsp;modify&nbsp;position&nbsp;#8&nbsp;EURUSD&nbsp;(sl:&nbsp;1.13456,&nbsp;tp:&nbsp;0.00000)&nbsp;[done]</div>
<div class="a" style="left:124.2px;top:405.7px;width:0.8px;height:140.8px;background:#d8d8d8"></div>
<div class="a" style="left:13.2px;top:405.5px;width:0.9px;height:154.5px;background:#c4c4c4"></div>
<div class="a" style="left:983px;top:405.7px;width:12px;height:154.5px;background:#ececec"></div>
<svg class="a" style="left:983px;top:405px" width="13" height="155"><path d="M3.5 9L6 6.2L8.5 9Z" fill="#404040"/><path d="M3.5 147.5L6 150.3L8.5 147.5Z" fill="#404040"/><rect x="1.2" y="126.4" width="9.5" height="16" rx="1.5" fill="url(#sg)" stroke="#9a9a9a" stroke-width="0.8"/><path d="M3.8 131.5H8.2M3.8 133.5H8.2M3.8 135.5H8.2" stroke="#505050" stroke-width="0.7"/><defs><linearGradient id="sg" x1="0" x2="1"><stop offset="0" stop-color="#f8f8f8"/><stop offset="1" stop-color="#d4d4d4"/></linearGradient></defs></svg>
<div class="a" style="left:13.5px;top:559.7px;width:983px;height:1.2px;background:#4a4a4a"></div>
<div class="a" style="left:164.3px;top:560px;width:44.5px;height:14px;background:#fff;border:1.2px solid #4a4a4a;border-top:none;border-radius:0 0 1.5px 1.5px"></div>
<div class="t" style="left:22.43px;top:563.09px;font-size:9.2px;color:#808080;transform:scaleX(0.9434);transform-origin:0 0;">Торговля</div>
<div class="a" style="left:65.5px;top:562.5px;width:0.9px;height:9px;background:#8a8a8a"></div>
<div class="t" style="left:72.02px;top:563.09px;font-size:9.2px;color:#808080;transform:scaleX(0.9209);transform-origin:0 0;">История</div>
<div class="a" style="left:112.4px;top:562.5px;width:0.9px;height:9px;background:#8a8a8a"></div>
<div class="t" style="left:118.82px;top:563.09px;font-size:9.2px;color:#808080;transform:scaleX(0.9072);transform-origin:0 0;">Операции</div>
<div class="t" style="left:171.07px;top:563.09px;font-size:9.2px;color:#000;transform:scaleX(0.9330);transform-origin:0 0;">Журнал</div>
<div class="a" style="left:3px;top:577.6px;width:994px;height:1px;background:#c8c8c8"></div>
<div class="a" style="left:3px;top:578.6px;width:994px;height:16px;background:#f0f0f0"></div>
<div class="t" style="left:4.66px;top:583.29px;font-size:9.2px;color:#000;transform:scaleX(0.8810);transform-origin:0 0;">Для вызова справки нажмите F1</div>
<div class="a" style="left:687px;top:580px;width:0.9px;height:13.5px;background:#c0c0c0"></div>
<div class="a" style="left:755.8px;top:580px;width:0.9px;height:13.5px;background:#c0c0c0"></div>
<div class="a" style="left:804.8px;top:580px;width:0.9px;height:13.5px;background:#c0c0c0"></div>
<div class="a" style="left:854.4px;top:580px;width:0.9px;height:13.5px;background:#c0c0c0"></div>
<div class="a" style="left:901.4px;top:580px;width:0.9px;height:13.5px;background:#c0c0c0"></div>
<div class="a" style="left:949.8px;top:580px;width:0.9px;height:13.5px;background:#c0c0c0"></div>
<div class="t" style="left:691.32px;top:583.39px;font-size:9.2px;color:#000;transform:scaleX(0.8202);transform-origin:0 0;">2019.03.18 21:00</div>
<div class="t" style="left:759.86px;top:583.39px;font-size:9.2px;color:#000;transform:scaleX(0.8186);transform-origin:0 0;">O: 1.13366</div>
<div class="t" style="left:808.59px;top:583.39px;font-size:9.2px;color:#000;transform:scaleX(0.8340);transform-origin:0 0;">H: 1.13418</div>
<div class="t" style="left:857.58px;top:583.39px;font-size:9.2px;color:#000;transform:scaleX(0.8412);transform-origin:0 0;">L: 1.13349</div>
<div class="t" style="left:905.82px;top:583.39px;font-size:9.2px;color:#000;transform:scaleX(0.8288);transform-origin:0 0;">C: 1.13418</div>
<div class="t" style="left:954.16px;top:583.39px;font-size:9.2px;color:#000;transform:scaleX(0.8282);transform-origin:0 0;">V: 1341</div>
<div class="a" style="left:0px;top:594.2px;width:1000px;height:2px;background:#121526"></div>
<div class="a" style="left:0px;top:596px;width:1000px;height:1px;background:#2a90b8"></div>
<div class="a" style="left:0px;top:597px;width:1000px;height:28px;background:linear-gradient(#3b3d4b 0,#3b3d4b 8.3px,#151727 8.8px,#131525 28px)"></div>
<div class="a" style="left:167px;top:598.4px;width:95px;height:25px;background:linear-gradient(#3e404e 0,#3a3c4a 30%,#141625 36%,#111322 100%);border:1px solid #2c2e3c;border-radius:2.5px"></div>
<div class="a" style="left:264px;top:598.4px;width:94px;height:25px;background:linear-gradient(#3e404e 0,#3a3c4a 30%,#141625 36%,#111322 100%);border:1px solid #2c2e3c;border-radius:2.5px"></div>
<div class="a" style="left:361px;top:598.4px;width:94px;height:25px;background:linear-gradient(#3e404e 0,#3a3c4a 30%,#141625 36%,#111322 100%);border:1px solid #2c2e3c;border-radius:2.5px"></div>
<div class="a" style="left:457.5px;top:598.4px;width:93.10000000000002px;height:25px;background:linear-gradient(#3e404e 0,#3a3c4a 30%,#141625 36%,#111322 100%);border:1px solid #2c2e3c;border-radius:2.5px"></div>
<div class="a" style="left:553.5px;top:598.4px;width:93.5px;height:25px;background:linear-gradient(#3e404e 0,#3a3c4a 30%,#141625 36%,#111322 100%);border:1px solid #2c2e3c;border-radius:2.5px"></div>
<div class="a" style="left:650px;top:598.4px;width:94px;height:25px;background:linear-gradient(170deg,#5a5e6e 0,#474b5a 40%,#141a28 52%,#0e1420 100%);border:1px solid #9a9eaa;border-radius:2.5px"></div>
<svg class="a" style="left:0;top:0" width="1000" height="625"><defs><radialGradient id="orb" cx="0.5" cy="0.75" r="0.75"><stop offset="0" stop-color="#5ae0ff"/><stop offset="0.45" stop-color="#1a78b8"/><stop offset="1" stop-color="#0c3460"/></radialGradient><linearGradient id="orbh" x1="0" y1="0" x2="0" y2="1"><stop offset="0" stop-color="#ffffff" stop-opacity="0.45"/><stop offset="1" stop-color="#ffffff" stop-opacity="0.05"/></linearGradient></defs><circle cx="18.5" cy="610.8" r="13" fill="url(#orb)" stroke="#5a7890" stroke-width="0.8"/><ellipse cx="18.5" cy="605.5" rx="10" ry="6.5" fill="url(#orbh)"/><path d="M12.8 605.2Q15.5 603.6 18.2 605.3L17.6 610.2Q15 608.8 12.2 610.2Z" fill="#f26522"/><path d="M18.8 605.5Q21.8 607.2 25 605.2L24.4 610.2Q21.4 611.8 18.2 610.5Z" fill="#8dc63f"/><path d="M12.1 610.9Q15 609.5 17.5 610.9L16.9 615.8Q14.3 614.4 11.4 615.8Z" fill="#00aeef"/><path d="M18.1 611.2Q21.3 612.6 24.3 611L23.6 615.9Q20.6 617.5 17.5 616.2Z" fill="#ffc20e"/><circle cx="61.5" cy="609.8" r="6.6" fill="#3cc0f0"/><circle cx="61.5" cy="609.8" r="3.3" fill="#12152a"/><rect x="57.2" y="608.8" width="8.8" height="1.8" fill="#3cc0f0"/><path d="M61.5 610.6H68.5V613.2H61.5Z" fill="#12152a"/><path d="M52.5 617.5Q56 602 71.5 600.5Q70 603 67.5 603Q58 604 54.5 616Z" fill="#f0c020"/><rect x="93" y="602.5" width="20" height="16" rx="1" fill="#0a0a0e"/><rect x="94.5" y="603" width="5" height="1.2" fill="#30a040"/><rect x="100" y="603" width="4" height="1.2" fill="#d03030"/><rect x="93.5" y="610" width="19" height="4.5" fill="#30d8e8"/><rect x="97" y="614.5" width="12" height="3" fill="#1a6a78"/><rect x="98" y="616" width="10" height="1" fill="#60e8f0"/><circle cx="144.5" cy="609.8" r="8.6" fill="#2a3038" stroke="#9aa2aa" stroke-width="1"/><circle cx="144.5" cy="609.8" r="6.8" fill="#1ab0c8"/><path d="M142 605.3L149 609.8L142 614.3Z" fill="#0a0a0a"/><circle cx="183" cy="609" r="10" fill="#db4437"/><path d="M183 609L174.3 604A10 10 0 0 0 178 617.7Z" fill="#0f9d58"/><path d="M183 609L178 617.7A10 10 0 0 0 192.7 611L183 609Z" fill="#f4c20d"/><path d="M183 609H193A10 10 0 0 0 192.7 611Z" fill="#f4c20d"/><circle cx="183" cy="609" r="4.6" fill="#fff"/><circle cx="183" cy="609" r="3.6" fill="#4285f4"/><circle cx="280" cy="609" r="9" fill="#1aa0e8"/><text x="276" y="614" font-family="Liberation Sans" font-weight="bold" font-size="13" fill="#fff">S</text><circle cx="286" cy="616" r="3.6" fill="#e03030"/><text x="284.6" y="618.3" font-family="Liberation Sans" font-size="5.5" fill="#fff">3</text><rect x="366.5" y="600" width="19" height="15" fill="#eef3f8" stroke="#7a9ab8" stroke-width="0.8"/><rect x="366.5" y="600" width="19" height="2" fill="#6a9ad0"/><path d="M369.5 612V606M372 611V604M374.5 610V607M377 609V603.5" stroke="#303838" stroke-width="0.9"/><circle cx="378.5" cy="612.5" r="5.8" fill="#58b040"/><path d="M372.8 613.5Q375 618.5 380 618.5L380 613Z" fill="#f0c820"/><path d="M378.5 618.3Q383.5 618 384.3 612.5L378.5 612.5Z" fill="#3a7ed0"/><path d="M461 611L470 601L482 607L473 618Z" fill="#e8c838" stroke="#9a7a18" stroke-width="0.7"/><path d="M461 611L473 618L473 620L461 613Z" fill="#b08a18"/><path d="M464 609.5L470 603L479 607.5L473 615Z" fill="#f4f0d8"/><circle cx="471.5" cy="609" r="3.8" fill="#3a8ac8"/><path d="M468.5 609A3.8 3.8 0 0 1 473 605.5L471.5 609Z" fill="#40b040"/><circle cx="471.5" cy="609" r="1.3" fill="#e8c838"/><path d="M558 611L567 601L579 607L570 618Z" fill="#e8c838" stroke="#9a7a18" stroke-width="0.7"/><path d="M558 611L570 618L570 620L558 613Z" fill="#b08a18"/><path d="M561 609.5L567 603L576 607.5L570 615Z" fill="#f4f0d8"/><circle cx="568.5" cy="609" r="3.8" fill="#3a8ac8"/><path d="M565.5 609A3.8 3.8 0 0 1 570 605.5L568.5 609Z" fill="#40b040"/><circle cx="568.5" cy="609" r="1.3" fill="#e8c838"/><path d="M655.5 619Q656 610 662.5 609.5Q669 610 669.5 619Z" fill="#2a6ad0"/><path d="M660.5 610L662.5 614.5L664.5 610Z" fill="#e8eef8"/><circle cx="662.5" cy="606" r="3.4" fill="#f2c8a0"/><path d="M655.5 603L662.5 600L669.5 603L662.5 605.5Z" fill="#181818"/><rect x="660.5" y="603.5" width="4" height="1.8" fill="#181818"/><circle cx="672" cy="609.5" r="4" fill="#b8d8f0" stroke="#404a58" stroke-width="1.2"/><path d="M669.3 612.5L665.5 617.5" stroke="#303030" stroke-width="1.8"/><circle cx="773.5" cy="609" r="5.2" fill="#2a5ad0" stroke="#c0c8e0" stroke-width="0.9"/><text x="771.5" y="612" font-family="Liberation Sans" font-weight="bold" font-size="7.5" fill="#fff">?</text><rect x="785.5" y="602.5" width="4.5" height="3.5" fill="none" stroke="#d0d0d0" stroke-width="0.8"/><rect x="787" y="601.2" width="4.5" height="3.5" fill="none" stroke="#d0d0d0" stroke-width="0.8"/><path d="M786.5 612H790L788.2 614Z" fill="#d0d0d0"/><g transform="translate(0,2.3)"><circle cx="817" cy="609" r="5.3" fill="#1aa0e8"/><circle cx="814.5" cy="606.5" r="2.5" fill="#1aa0e8"/><circle cx="819.5" cy="611.5" r="2.5" fill="#1aa0e8"/><text x="814.3" y="612.2" font-family="Liberation Sans" font-weight="bold" font-size="8" fill="#fff">S</text><circle cx="820.8" cy="613" r="2.2" fill="#e02020"/><path d="M828.5 604L833 602.5V615L828.5 613.5Z" fill="#e87020"/><path d="M833 602.5L838.5 604V609H833Z" fill="#38a038"/><path d="M833 609H838.5V614.5L833 615Z" fill="#d03020"/><path d="M829 608Q831 606 833 607V611L829 612Z" fill="#f0c020"/><rect x="846.5" y="603" width="8" height="11" fill="#5aa0e0" stroke="#c0d8f0" stroke-width="0.5"/><rect x="848" y="604.5" width="5" height="4" fill="#f0f0f0"/><path d="M844 611Q845 604 857 605" stroke="#f0a020" stroke-width="1.2" fill="none"/><rect x="862" y="603" width="10.5" height="11" fill="#1a60c0"/><circle cx="867.2" cy="608.5" r="3.8" fill="none" stroke="#b8d8f8" stroke-width="0.8"/><circle cx="867.2" cy="608.5" r="1.8" fill="none" stroke="#b8d8f8" stroke-width="0.8"/><path d="M879.5 614V604H885.5V614" stroke="#e8e8e8" stroke-width="1" fill="none"/><rect x="886.3" y="607" width="1.6" height="7" fill="#d02020"/><rect x="888.8" y="607" width="1.6" height="7" fill="#d02020"/><path d="M896 603V610M895 606H898" stroke="#d8d8d8" stroke-width="0.9"/><rect x="897.5" y="605" width="9.5" height="7" fill="#50d0f0" stroke="#e8e8e8" stroke-width="0.6"/><rect x="900" y="612" width="5" height="1.5" fill="#d0d0d0"/><path d="M913 607H915.5L918.5 604V614L915.5 611H913Z" fill="#e0e0e0"/><path d="M920 606.5Q921.5 609 920 611.5M921.8 605Q924 609 921.8 613" stroke="#d0d0d0" stroke-width="0.8" fill="none"/></g></svg>
<div class="t" style="left:196.93px;top:606.69px;font-size:9.2px;color:#e8e8e8;transform:scaleX(0.9132);transform-origin:0 0;">Прошу сдела...</div>
<div class="t" style="left:293.84px;top:606.69px;font-size:9.2px;color:#e8e8e8;transform:scaleX(0.8803);transform-origin:0 0;">Skype [3]</div>
<div class="t" style="left:390.84px;top:606.69px;font-size:9.2px;color:#e8e8e8;transform:scaleX(0.8793);transform-origin:0 0;">9492078 - Met...</div>
<div class="t" style="left:487.01px;top:606.69px;font-size:9.2px;color:#e8e8e8;transform:scaleX(0.9345);transform-origin:0 0;">MetaEditor - [...</div>
<div class="t" style="left:583.52px;top:606.69px;font-size:9.2px;color:#e8e8e8;transform:scaleX(0.9263);transform-origin:0 0;">MetaEditor - [...</div>
<div class="t" style="left:680.33px;top:606.69px;font-size:9.2px;color:#f0f0f0;transform:scaleX(0.8963);transform-origin:0 0;">Strategy Teste...</div>
<div class="t" style="left:752.55px;top:607.06px;font-size:7.6px;color:#e0e0e0;transform:scaleX(1.0741);transform-origin:0 0;">EN</div>
<div class="t" style="left:949.11px;top:603.06px;font-size:7.6px;color:#e0e0e0;transform:scaleX(1.0307);transform-origin:0 0;">21:32</div>
<div class="t" style="left:938.99px;top:614.86px;font-size:7.6px;color:#e0e0e0;transform:scaleX(1.0350);transform-origin:0 0;">01.07.2019</div>
<div class="a" style="left:989.6px;top:597px;width:10.4px;height:28px;background:#1a1d2e;border-left:1px solid #3a3d4e"></div></body></html>
